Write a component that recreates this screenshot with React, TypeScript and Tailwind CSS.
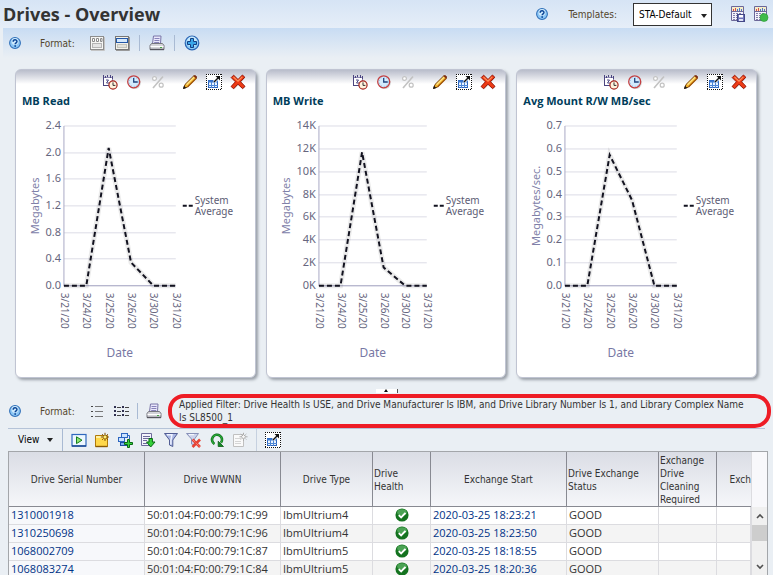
import React, { useState } from 'react';

type IconProps = { children: React.ReactNode; size?: number };

const Glyph: React.FC<IconProps> = ({ children, size = 16 }) => (
    <svg width={size} height={size} viewBox="0 0 16 16" aria-hidden="true" className="block shrink-0">
        {children}
    </svg>
);

const HelpIcon = () => (
    <Glyph size={12}>
        <circle cx="8" cy="8" r="7.2" fill="#8cc6f5" stroke="#2f6fb8" strokeWidth="1.4" />
        <circle cx="8" cy="6" r="4.6" fill="#cfeafd" />
        <path d="M5.6 6.2C5.6 3 10.6 3 10.6 6C10.6 8 8.2 7.8 8.2 9.8" fill="none" stroke="#0b4596" strokeWidth="2" />
        <rect x="7.2" y="11" width="2.1" height="2.1" fill="#0b4596" />
    </Glyph>
);

const GraphsLayoutIcon = () => (
    <Glyph>
        <rect x="1.5" y="1.5" width="13" height="13" fill="#f6f6f4" stroke="#8d8d8d" />
        <path d="M15.5 2v13.5H2" fill="none" stroke="#c4c4c4" />
        <path d="M3.5 3.5h2v3h-2zM7.5 3.5h2v3h-2zM11.5 3.5h1.5v3h-1.5z" fill="#fff" stroke="#8a8a8a" />
        <rect x="3.5" y="8.5" width="9" height="4" fill="#e4e4e4" stroke="#b5b5b5" />
    </Glyph>
);

const SplitLayoutIcon = () => (
    <Glyph>
        <rect x="1.5" y="1.5" width="13" height="13" fill="#f2f1ea" stroke="#777" />
        <path d="M15.5 2v13.5H2" fill="none" stroke="#999" />
        <rect x="2.5" y="3.5" width="11" height="4" fill="#d4e8fb" stroke="#2458a8" />
        <rect x="3.5" y="9.5" width="9" height="3" fill="#e2e2dc" stroke="#c4c4bc" />
    </Glyph>
);

const PrintIcon = () => (
    <Glyph>
        <path d="M4.5 1h7.5l-.5 7.5H3.5z" fill="#e9e7fb" stroke="#7975a8" />
        <path d="M5.5 3.5h5M5.4 5.5h5M5.2 7.5h5" stroke="#8782ba" />
        <path d="M2.5 8.5h11l1.5 2v4H1v-4z" fill="#d4d4da" stroke="#77777f" />
        <path d="M1.5 11.5h13" stroke="#fff" />
        <path d="M1 14.5h14" stroke="#55555e" strokeWidth="1.4" />
        <rect x="11" y="12" width="2" height="1" fill="#4aa84a" />
    </Glyph>
);

const AddIcon = () => (
    <Glyph>
        <circle cx="8" cy="8" r="6.8" fill="#8fcdf6" stroke="#2a64b4" strokeWidth="1.2" />
        <circle cx="8" cy="6.6" r="5" fill="#c4e7fb" />
        <path d="M6.5 3.5h3v3h3v3h-3v3h-3v-3h-3v-3h3z" fill="#3aa6e8" stroke="#123f86" />
    </Glyph>
);

const CalendarClockIcon = () => (
    <Glyph>
        <path d="M1.5 3.5h9v8h-9z" fill="#fff" stroke="#8e89b5" />
        <path d="M1.5 12V1M1 11.5h7M3.5 2v2M5.5 1v2M8.5 1v3M10.5 2v3" stroke="#4b4580" />
        <path d="M4 6h2.5L4.5 9h3" fill="none" stroke="#4b4580" />
        <circle cx="11" cy="11" r="4.1" fill="#fff3dd" stroke="#a3231b" strokeWidth="1.2" />
        <path d="M11 8.4v3h2.4" fill="none" stroke="#333" />
    </Glyph>
);

const ClockIcon = () => (
    <Glyph>
        <circle cx="8.5" cy="8.8" r="6.3" fill="#999" opacity=".4" />
        <circle cx="7.7" cy="7.8" r="6" fill="#d3ebfd" stroke="#c43f41" strokeWidth="1.3" />
        <circle cx="7.7" cy="7.8" r="4.6" fill="none" stroke="#8bb7dc" strokeDasharray="1 2" />
        <path d="M7.7 4v4h4" fill="none" stroke="#20437e" strokeWidth="1.3" />
    </Glyph>
);

const PercentIcon = () => (
    <Glyph>
        <path d="M3 14L13 2.5" stroke="#c2c2c2" strokeWidth="1.6" />
        <circle cx="4.5" cy="4.5" r="1.9" fill="#fff" stroke="#c2c2c2" strokeWidth="1.2" />
        <circle cx="11.2" cy="11.2" r="2" fill="#fff" stroke="#c2c2c2" strokeWidth="1.2" />
    </Glyph>
);

const PencilIcon = () => (
    <Glyph>
        <path d="M1.5 14.5L3 10.5L11.8 1.8Q14.8 1 14.4 4.2L5.6 13Z" fill="#f5b52b" stroke="#6d3b0c" />
        <path d="M4.5 10.7L12 3.2" stroke="#ffe58a" strokeWidth="1.3" />
        <path d="M5.5 13L14.3 4.3" stroke="#a75c10" strokeWidth="1.2" />
        <path d="M1 15l1-3.3L4.3 14z" fill="#171717" />
        <path d="M11.8 1.5q3.4-.6 2.8 2.7l-1-.1-1.9-1.8z" fill="#7d281a" />
    </Glyph>
);

const DetachIcon = () => (
    <Glyph>
        <rect width="16" height="16" fill="#fff" />
        <path d="M0 .5h16M0 15.5h16M.5 0v16M15.5 0v16" stroke="#111" strokeDasharray="1 1" shapeRendering="crispEdges" />
        <rect x="2.5" y="6.5" width="9" height="7" fill="#e9f3ff" stroke="#2b64bd" />
        <path d="M2 7.5h10" stroke="#3977d0" strokeWidth="2" />
        <path d="M2 11.5h10M5.5 8v6M8.5 8v6" stroke="#4c86d6" />
        <path d="M8 8L12 4" stroke="#fff" strokeWidth="3" />
        <path d="M8 8L13 3" stroke="#111" strokeWidth="1.4" />
        <path d="M9.5 2H14v4.5z" fill="#111" />
    </Glyph>
);

const RemoveIcon = () => (
    <Glyph>
        <path d="M3 2.5L14 14M14 2.5L3 14" stroke="#888" strokeWidth="3.6" opacity=".45" />
        <path d="M1.2 3.6L3.6 1.2L8 5.5L12.4 1L14.8 3.2L10.5 7.7L15 12.4L12.6 14.6L7.9 10.2L3.6 14.7L1.1 12.5L5.4 7.8Z" fill="#ee3a14" stroke="#991708" />
        <path d="M3.5 3L8 7.2L12.3 2.8" fill="none" stroke="#ff8f58" strokeWidth="1.2" />
    </Glyph>
);

const TemplateSheet = () => (
    <>
        <path d="M1.5.5h12v14h-12z" fill="#f4f3fb" stroke="#6c6899" />
        <path d="M2 1h11v4H2z" fill="#f5edc8" />
        <path d="M3.5 5V3M5.5 5V2" stroke="#d94b43" />
        <path d="M7.5 5V3M9.5 5V2M11.5 5V3" stroke="#4974c9" />
        <path d="M2 5.5h11" stroke="#6c6899" />
        <path d="M3 7.5h9M3 9.5h9M3 11.5h9M3 13.5h9" stroke="#8480aa" strokeDasharray="2 1" />
    </>
);

const SaveTemplateIcon = () => (
    <Glyph>
        <TemplateSheet />
        <rect x="7.5" y="8.5" width="7" height="7" fill="#6d72b8" stroke="#444886" />
        <path d="M9 9h4v2.5H9z" fill="#fff" />
        <path d="M9 13h4v2H9z" fill="#dfe2f4" />
    </Glyph>
);

const ApplyTemplateIcon = () => (
    <Glyph>
        <TemplateSheet />
        <circle cx="11" cy="11.5" r="4" fill="#3fbb4a" stroke="#2b9a38" strokeWidth=".6" />
    </Glyph>
);

const ListIcon = () => (
    <Glyph>
        <path d="M2 3.5h2M2 8.5h2M2 13.5h2" stroke="#444" />
        <path d="M6 3.5h8M6 8.5h8M6 13.5h8" stroke="#777" />
    </Glyph>
);

const DetailListIcon = () => (
    <Glyph>
        <path d="M1 4h2M9 4h2M1 8h2M9 8h2M1 12h2M9 12h2" stroke="#303050" strokeWidth="2" />
        <path d="M4 4.5h4M12 4.5h4M4 8.5h4M12 8.5h4M4 12.5h4M12 12.5h4" stroke="#444" />
    </Glyph>
);

const RunIcon = () => (
    <Glyph>
        <rect x="1" y="2.5" width="14" height="11.5" fill="#edf7ff" stroke="#2f68bd" strokeWidth="1.2" />
        <path d="M1 14h14" stroke="#17448e" strokeWidth="1.4" />
        <path d="M5.5 4.8L11 8.2L5.5 11.6Z" fill="#8ce46f" stroke="#187c1c" />
    </Glyph>
);

const NewNoteIcon = () => (
    <Glyph>
        <path d="M1.5 3.5h12v11h-12z" fill="#ffd84b" stroke="#b07a0a" />
        <path d="M2 5h11" stroke="#fff1a5" strokeWidth="2" />
        <path d="M1.5 14.5h12" stroke="#8a5a05" strokeWidth="1.4" />
        <path d="M11 .8v8.4M6.8 5h8.4M8.2 2.2l5.6 5.6M13.8 2.2L8.2 7.8" stroke="#7a4a00" strokeDasharray="1.5 .7" />
        <path d="M11 2.5L13.5 5L11 7.5L8.5 5z" fill="#ffef75" stroke="#7a4a00" />
    </Glyph>
);

const AddNodesIcon = () => (
    <Glyph>
        <rect x="4.5" y="1.5" width="6" height="4" fill="#cbe3ff" stroke="#2d66c0" />
        <rect x="1.5" y="5.5" width="6" height="4" fill="#cbe3ff" stroke="#2d66c0" />
        <rect x="3.5" y="10.5" width="6" height="3" fill="#7daef0" stroke="#1c4da3" />
        <path d="M10 3.5h2.5V7" fill="none" stroke="#2d66c0" />
        <path d="M10.5 7.5h2v3h3v2h-3v3h-2v-3h-3v-2h3z" fill="#37d23d" stroke="#086714" />
    </Glyph>
);

const ExportIcon = () => (
    <Glyph>
        <path d="M1.5 1.5h10v12h-10z" fill="#f4f3fc" stroke="#6d6a9b" />
        <path d="M3 4.5h7M3 6.5h7M3 8.5h4M3 11.5h4" stroke="#6d6a9b" />
        <path d="M9 6.5h3.4V10H15l-4.3 5L6.5 10H9z" fill="#35cf39" stroke="#086714" />
    </Glyph>
);

const FunnelIcon = () => (
    <Glyph>
        <path d="M1.5 1.5h13L9.8 8v6.5L6.5 13V8z" fill="#a9b6e3" stroke="#515d94" />
        <path d="M4 2.7h5L7.9 8v4.5" fill="none" stroke="#f0f4ff" strokeWidth="1.4" />
    </Glyph>
);

const ClearFunnelIcon = () => (
    <Glyph>
        <path d="M.5 1.5h12L8.5 7v6L5.5 12V7z" fill="#ccd3ec" stroke="#8891b8" />
        <path d="M3 2.7h5" stroke="#fff" />
        <path d="M6.5 7.5L14 15M14 7.5L6.5 15" stroke="#e64234" strokeWidth="2.6" />
        <path d="M7 8L13.5 14.5" stroke="#ff9f90" strokeDasharray="1 1" />
    </Glyph>
);

const RefreshIcon = () => (
    <Glyph>
        <path d="M5.4 12A5 5 0 1 1 12 10.8" fill="none" stroke="#0c6d1a" strokeWidth="2.6" />
        <path d="M5.4 12A5 5 0 1 1 12 10.8" fill="none" stroke="#2cab38" strokeWidth="1.2" />
        <path d="M9.2 9.2v5.3h5.3z" fill="#148824" stroke="#0c5d18" strokeWidth=".8" />
    </Glyph>
);

const NewDisabledIcon = () => (
    <Glyph>
        <path d="M1.5 2.5h10v12h-10z" fill="#fafafa" stroke="#c0c0c0" />
        <path d="M3 6.5h6M3 9.5h6M3 11.5h6" stroke="#d5d5d5" />
        <path d="M11.5.8v8M7.5 4.8h8M8.8 2l5.5 5.5M14.3 2L8.8 7.5" stroke="#aaa" strokeDasharray="1.5 .7" />
        <path d="M11.5 2.5L13.7 4.8L11.5 7L9.2 4.8z" fill="#f6f6f6" stroke="#aaa" />
    </Glyph>
);

const HealthyIcon = () => (
    <svg width="14" height="14" viewBox="0 0 16 16" role="img" aria-label="Healthy" className="mx-auto block">
        <circle cx="8" cy="8" r="7.5" fill="#14731f" />
        <ellipse cx="8" cy="5" rx="5.5" ry="3.6" fill="#4ba354" />
        <path d="M4.3 8.2L7 10.8L12 5.6" fill="none" stroke="#fff" strokeWidth="2.2" />
    </svg>
);

const IconButton: React.FC<{ label: string; disabled?: boolean; children: React.ReactNode }> = ({ label, disabled, children }) => (
    <button type="button" title={label} aria-label={label} disabled={disabled} className="block shrink-0">
        {children}
    </button>
);

const Separator = () => <span className="h-4 w-px shrink-0 bg-[#a9bad3]" />;

interface Chart {
    title: string;
    unit: string;
    ticks: string[];
    max: number;
    values: number[];
    axisX: number;
}

const dates = ['3/21/20', '3/24/20', '3/25/20', '3/26/20', '3/30/20', '3/31/20'];

const charts: Chart[] = [
    { title: 'MB Read', unit: 'Megabytes', ticks: ['2.4', '2.0', '1.6', '1.2', '0.8', '0.4', '0.0'], max: 2.4, values: [0, 0, 2.07, 0.35, 0, 0], axisX: 48 },
    { title: 'MB Write', unit: 'Megabytes', ticks: ['14K', '12K', '10K', '8K', '6K', '4K', '2K', '0K'], max: 14, values: [0, 0, 11.7, 1.6, 0, 0], axisX: 52 },
    { title: 'Avg Mount R/W MB/sec', unit: 'Megabytes/sec.', ticks: ['0.7', '0.6', '0.5', '0.4', '0.3', '0.2', '0.1', '0.0'], max: 0.7, values: [0, 0, 0.573, 0.375, 0, 0], axisX: 48 },
];

const PLOT_TOP = 16;
const PLOT_HEIGHT = 160;
const PLOT_RIGHT = 160;

const LineChart: React.FC<{ chart: Chart }> = ({ chart }) => {
    const step = (PLOT_RIGHT - chart.axisX) / (dates.length - 1);
    const bottom = PLOT_TOP + PLOT_HEIGHT;
    const points = chart.values
        .map((v, i) => `${chart.axisX + i * step},${bottom - (v / chart.max) * PLOT_HEIGHT}`)
        .join(' ');

    return (
        <svg viewBox="0 0 239 267" role="img" aria-label={chart.title} className="block h-auto w-full font-['Noto_Sans',sans-serif]">
            {chart.ticks.map((tick, i) => {
                const y = Math.round(PLOT_TOP + (i * PLOT_HEIGHT) / (chart.ticks.length - 1));
                return (
                    <g key={tick}>
                        <path d={`M${chart.axisX} ${y}H${PLOT_RIGHT}`} stroke="#dcdce6" />
                        <text x={chart.axisX - 3} y={y + 3} textAnchor="end" fontSize="11" fill="#66667e">{tick}</text>
                    </g>
                );
            })}
            <path d={`M${chart.axisX} ${PLOT_TOP}V${bottom}H${PLOT_RIGHT}`} fill="none" stroke="#a9a9c6" />
            <polyline points={points} fill="none" stroke="#000" strokeOpacity=".08" strokeWidth="5" />
            <polyline points={points} fill="none" stroke="#12121f" strokeWidth="2" strokeDasharray="5 3" />
            {dates.map((date, i) => (
                <text key={date} transform={`translate(${chart.axisX + i * step - 3} 183) rotate(90)`} fontSize="10" fill="#66667e">{date}</text>
            ))}
            <text transform={`translate(23 ${PLOT_TOP + PLOT_HEIGHT / 2}) rotate(-90)`} textAnchor="middle" fontSize="11" fill="#8080a8">{chart.unit}</text>
            <text x={(chart.axisX + PLOT_RIGHT) / 2} y="247" textAnchor="middle" fontSize="12" fill="#7878a4">Date</text>
            <path d="M167 96h4M173 96h4" stroke="#12121f" strokeWidth="2" />
            <text x="179" y="94" fontSize="10" fill="#5c5c74">System</text>
            <text x="179" y="105" fontSize="10" fill="#5c5c74">Average</text>
        </svg>
    );
};

const ChartCard: React.FC<{ chart: Chart }> = ({ chart }) => (
    <section className="rounded-md border border-[#c0c4d2] bg-white bg-linear-to-b from-[#b9bdcb] to-white to-[14px] shadow-[2px_2px_3px_#9aa0a8]">
        <div className="flex items-center justify-end gap-2 pt-1 pr-[9px]">
            <IconButton label="Date range"><CalendarClockIcon /></IconButton>
            <IconButton label="Time"><ClockIcon /></IconButton>
            <IconButton label="Percent" disabled><PercentIcon /></IconButton>
            <span className="w-0" />
            <IconButton label="Edit"><PencilIcon /></IconButton>
            <IconButton label="Detach"><DetachIcon /></IconButton>
            <IconButton label="Remove"><RemoveIcon /></IconButton>
        </div>
        <h2 className="px-1.5 pt-[3px] pb-px font-['Open_Sans',sans-serif] text-[11px] leading-4 font-bold text-[#003d5b]">{chart.title}</h2>
        <LineChart chart={chart} />
    </section>
);

const columns = [
    { label: 'Drive Serial Number', width: 'w-[136px]', align: 'text-center' },
    { label: 'Drive WWNN', width: 'w-[136px]', align: 'text-center' },
    { label: 'Drive Type', width: 'w-[92px]', align: 'text-center' },
    { label: 'Drive Health', width: 'w-[58px]', align: 'text-left' },
    { label: 'Exchange Start', width: 'w-[136px]', align: 'text-center' },
    { label: 'Drive Exchange Status', width: 'w-[92px]', align: 'text-left' },
    { label: 'Exchange Drive Cleaning Required', width: 'w-[58px]', align: 'text-left' },
    { label: 'Exch', width: 'w-[34px]', align: 'text-right' },
];

const drives = [
    { serial: '1310001918', wwnn: '50:01:04:F0:00:79:1C:99', type: 'IbmUltrium4', start: '2020-03-25 18:23:21', status: 'GOOD' },
    { serial: '1310250698', wwnn: '50:01:04:F0:00:79:1C:96', type: 'IbmUltrium4', start: '2020-03-25 18:23:50', status: 'GOOD' },
    { serial: '1068002709', wwnn: '50:01:04:F0:00:79:1C:87', type: 'IbmUltrium5', start: '2020-03-25 18:18:55', status: 'GOOD' },
    { serial: '1068083274', wwnn: '50:01:04:F0:00:79:1C:84', type: 'IbmUltrium5', start: '2020-03-25 18:20:36', status: 'GOOD' },
];

const cell = 'border-r border-b border-[#dcdce0] px-0.5 whitespace-nowrap';

const DrivesTable = () => (
    <div className="flex min-h-0 min-w-0 flex-1 border border-b-0 border-[#a3a6aa] bg-white">
        <div className="min-w-0 flex-1 overflow-hidden">
            <table className="w-full table-fixed border-separate border-spacing-0 text-left">
                <thead>
                    <tr className="h-[55px] bg-linear-to-b from-[#dadde5] to-[#f6f7fa]">
                        {columns.map(c => (
                            <th key={c.label} className={`${c.width} ${c.align} border-r border-b border-[#888a92] px-px pt-0.5 leading-[13px] font-normal last:border-r-0 last:pr-0`}>
                                {c.label}
                            </th>
                        ))}
                    </tr>
                </thead>
                <tbody className="font-['Open_Sans',sans-serif] text-[11px]">
                    {drives.map(d => (
                        <tr key={d.serial} className="h-[18px] leading-4 even:bg-[#f4f4f4]">
                            <td className={`${cell} bg-[#f7f8fb]`}><a href="#drive" className="text-[#003286]">{d.serial}</a></td>
                            <td className={cell}>{d.wwnn}</td>
                            <td className={cell}>{d.type}</td>
                            <td className={cell}><HealthyIcon /></td>
                            <td className={cell}><a href="#exchange" className="text-[#003286]">{d.start}</a></td>
                            <td className={cell}>{d.status}</td>
                            <td className={cell} />
                            <td className={cell} />
                        </tr>
                    ))}
                </tbody>
            </table>
        </div>
        <div className="flex w-4 shrink-0 flex-col border-l border-[#dcdce0] bg-[#f8f8fb] pt-[55px]">
            <div className="flex flex-1 flex-col items-center bg-[#f0f0f0]">
                <button type="button" aria-label="Scroll up" className="flex h-[18px] w-full items-center justify-center">
                    <svg width="8" height="6" viewBox="0 0 8 6"><path d="M1 5L4 2L7 5" fill="none" stroke="#505050" strokeWidth="1.6" /></svg>
                </button>
                <div className="h-4 w-full bg-[#cdcdcd]" />
                <span className="flex-1" />
                <button type="button" aria-label="Scroll down" className="flex h-4 w-full items-center justify-center">
                    <svg width="8" height="6" viewBox="0 0 8 6"><path d="M1 1L4 4L7 1" fill="none" stroke="#505050" strokeWidth="1.6" /></svg>
                </button>
            </div>
        </div>
    </div>
);

const App: React.FC = () => {
    const [template, setTemplate] = useState('STA-Default');

    return (
        <main className="flex h-screen flex-col overflow-hidden bg-[#eaeff4] font-['DejaVu_Sans_Condensed','Open_Sans',sans-serif] text-[10px] text-[#333]">
            <header className="flex h-7 shrink-0 items-center bg-linear-to-b from-[#d6e4f5] to-[#e6eef8] pr-1 pl-[3px]">
                <h1 className="font-['Open_Sans',sans-serif] text-lg leading-7 font-bold text-[#333]">Drives - Overview</h1>
                <div className="ml-auto flex items-center">
                    <IconButton label="Help"><HelpIcon /></IconButton>
                    <label htmlFor="template" className="ml-5 text-[#53452c]">Templates:</label>
                    <div className="relative ml-4">
                        <select
                            id="template"
                            value={template}
                            onChange={(e) => setTemplate(e.target.value)}
                            className="block h-[23px] w-[79px] appearance-none border border-[#333] bg-white pl-[5px] text-[10px] text-black"
                        >
                            <option>STA-Default</option>
                        </select>
                        <svg width="6" height="4" viewBox="0 0 6 4" className="pointer-events-none absolute top-[11px] right-[5px]">
                            <path d="M0 0h6L3 4z" fill="#222" />
                        </svg>
                    </div>
                    <div className="ml-[18px] flex gap-[7px]">
                        <IconButton label="Save template"><SaveTemplateIcon /></IconButton>
                        <IconButton label="Apply template"><ApplyTemplateIcon /></IconButton>
                    </div>
                </div>
            </header>

            <div className="ml-[3px] flex h-[30px] shrink-0 items-center bg-linear-to-b from-[#c8dcf3] to-[#eaeff4] pl-1.5">
                <IconButton label="Help"><HelpIcon /></IconButton>
                <span className="ml-[19px] w-[49px] text-[#53452c]">Format:</span>
                <div className="flex items-center gap-[9px]">
                    <IconButton label="Graphs only"><GraphsLayoutIcon /></IconButton>
                    <IconButton label="Graphs and table"><SplitLayoutIcon /></IconButton>
                    <Separator />
                    <IconButton label="Print"><PrintIcon /></IconButton>
                    <Separator />
                    <IconButton label="Add graph"><AddIcon /></IconButton>
                </div>
            </div>

            <div className="grid shrink-0 grid-cols-3 gap-2.5 pt-[11px] pr-4 pl-[15px]">
                {charts.map(chart => <ChartCard key={chart.title} chart={chart} />)}
            </div>

            <div className="flex h-[15px] shrink-0 items-end justify-center">
                <button type="button" aria-label="Collapse graphs" className="flex h-1 w-[22px] items-center justify-center border-r border-[#555] bg-white">
                    <svg width="4" height="3" viewBox="0 0 4 3"><path d="M0 3h4L2 0z" fill="#111" /></svg>
                </button>
            </div>

            <div className="mx-2 flex h-9 shrink-0 items-center border-b border-[#b5c3d8] pt-0.5 pl-px">
                <IconButton label="Help"><HelpIcon /></IconButton>
                <span className="ml-[19px] w-[49px] text-[#53452c]">Format:</span>
                <div className="flex items-center gap-2">
                    <IconButton label="List view"><ListIcon /></IconButton>
                    <IconButton label="Detail view"><DetailListIcon /></IconButton>
                    <Separator />
                    <IconButton label="Print"><PrintIcon /></IconButton>
                </div>
                <p className="-mr-1.5 ml-1.5 flex-1 rounded-2xl border-4 border-[#ee1c25] pr-5 pl-[7px] leading-[13px]">
                    Applied Filter: Drive Health Is USE, and Drive Manufacturer Is IBM, and Drive Library Number Is 1, and Library Complex Name Is SL8500_1
                </p>
            </div>

            <div className="mx-1.5 flex h-[22px] shrink-0 items-center">
                <button type="button" className="flex w-14 items-center gap-2 pl-3 text-black">
                    View
                    <svg width="6" height="4" viewBox="0 0 6 4"><path d="M0 0h6L3 4z" fill="#222" /></svg>
                </button>
                <span className="h-[22px] w-px bg-[#a9bad3]" />
                <div className="flex items-center gap-[7px] px-2">
                    <IconButton label="Run"><RunIcon /></IconButton>
                    <IconButton label="New"><NewNoteIcon /></IconButton>
                    <IconButton label="Add to group"><AddNodesIcon /></IconButton>
                    <IconButton label="Export"><ExportIcon /></IconButton>
                    <IconButton label="Filter"><FunnelIcon /></IconButton>
                    <IconButton label="Clear filter"><ClearFunnelIcon /></IconButton>
                    <IconButton label="Refresh"><RefreshIcon /></IconButton>
                    <IconButton label="New policy" disabled><NewDisabledIcon /></IconButton>
                </div>
                <span className="h-[22px] w-px bg-[#c6d1e0]" />
                <div className="pl-2">
                    <IconButton label="Detach"><DetachIcon /></IconButton>
                </div>
            </div>

            <div className="mr-[5px] ml-2 flex min-h-0 flex-1">
                <DrivesTable />
            </div>
        </main>
    );
};

export default App;
